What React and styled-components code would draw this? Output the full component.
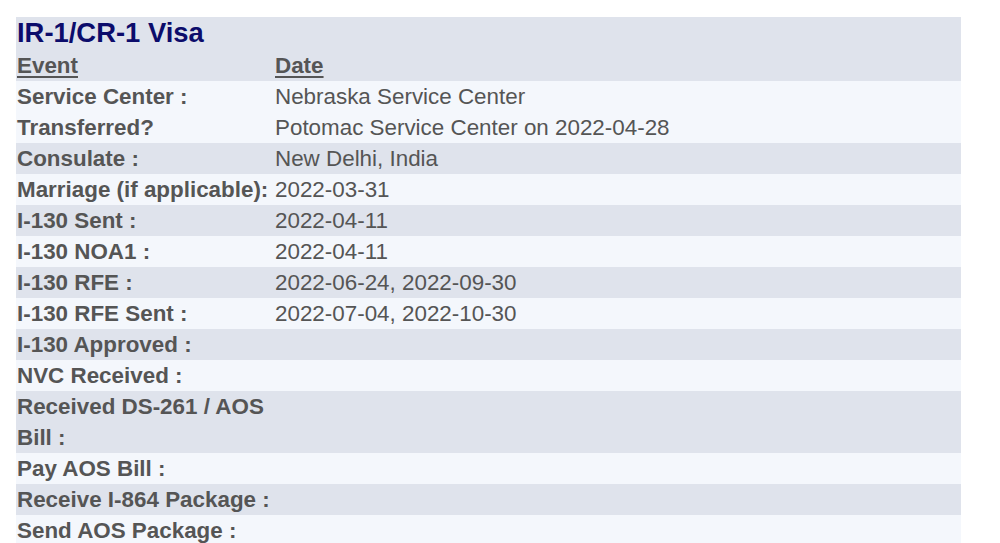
import React from 'react';
import styled, { createGlobalStyle } from 'styled-components';

const GlobalStyle = createGlobalStyle`
  body {
    margin: 0;
    padding: 17px 39px 0 16px;
    background: #fff;
    font-family: "Liberation Sans", Arial, sans-serif;
  }
`;

const Table = styled.div`
  display: flex;
  flex-direction: column;
  width: 945px;
  color: #555;
  font-size: 22.4px;
  line-height: 31px;
`;

const Head = styled.div`
  background: #dfe3ec;
`;

const Title = styled.h2`
  margin: 0;
  padding: 0 1px 2px;
  font-size: 27.4px;
  line-height: 31px;
  font-weight: bold;
  color: #0c0c6b;
`;

const Row = styled.div`
  display: grid;
  grid-template-columns: 258px 1fr;
  background: ${p => (p.$shade ? '#dfe3ec' : '#f4f7fc')};
`;

const HeadRow = styled(Row)`
  background: transparent;
`;

const Label = styled.div`
  padding: 0 1px;
  font-weight: bold;
  white-space: ${p => (p.$wrap ? 'normal' : 'nowrap')};
`;

const Value = styled.div`
  padding: 0 1px;
`;

const ColHead = styled.div`
  padding: 0 1px;
  font-weight: bold;
  text-decoration: underline;
  text-decoration-thickness: 2px;
  text-underline-offset: 3px;
`;

const rows = [
  { label: 'Service Center :', value: 'Nebraska Service Center', shade: false },
  { label: 'Transferred?', value: 'Potomac Service Center on 2022-04-28', shade: false },
  { label: 'Consulate :', value: 'New Delhi, India', shade: true },
  { label: 'Marriage (if applicable):', value: '2022-03-31', shade: false },
  { label: 'I-130 Sent :', value: '2022-04-11', shade: true },
  { label: 'I-130 NOA1 :', value: '2022-04-11', shade: false },
  { label: 'I-130 RFE :', value: '2022-06-24, 2022-09-30', shade: true },
  { label: 'I-130 RFE Sent :', value: '2022-07-04, 2022-10-30', shade: false },
  { label: 'I-130 Approved :', value: '', shade: true },
  { label: 'NVC Received :', value: '', shade: false },
  { label: 'Received DS-261 / AOS Bill :', value: '', shade: true, wrap: true },
  { label: 'Pay AOS Bill :', value: '', shade: false },
  { label: 'Receive I-864 Package :', value: '', shade: true },
  { label: 'Send AOS Package :', value: '', shade: false },
];

export default function App() {
  return (
    <>
      <GlobalStyle />
      <Table>
        <Head>
          <Title>IR-1/CR-1 Visa</Title>
          <HeadRow>
            <ColHead>Event</ColHead>
            <ColHead>Date</ColHead>
          </HeadRow>
        </Head>
        {rows.map(r => (
          <Row key={r.label} $shade={r.shade}>
            <Label $wrap={r.wrap}>{r.label}</Label>
            <Value>{r.value}</Value>
          </Row>
        ))}
      </Table>
    </>
  );
}
